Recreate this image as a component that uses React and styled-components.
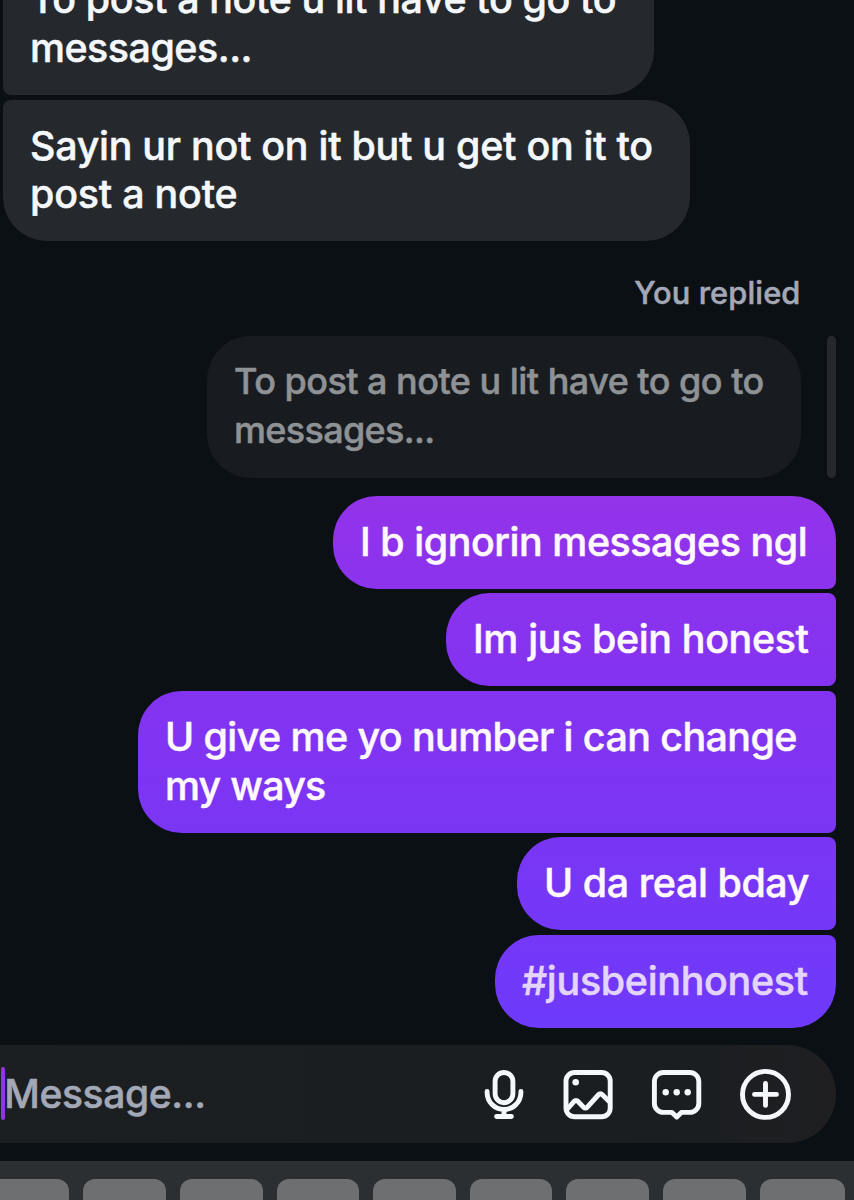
import React from 'react'
import styled, { createGlobalStyle } from 'styled-components'

const GlobalStyle = createGlobalStyle`
  * { box-sizing: border-box; }
  body {
    margin: 0;
    background: #0b1014;
    font-family: Inter, 'Liberation Sans', sans-serif;
    font-weight: 500;
    overflow: hidden;
  }
`

const Screen = styled.div`
  width: 854px;
  height: 1200px;
  overflow: hidden;
  display: flex;
  flex-direction: column;
  background: #0b1014;
  -webkit-text-stroke: 0.5px currentColor;
`

const Thread = styled.div`
  display: flex;
  flex-direction: column;
  justify-content: flex-end;
  flex: none;
  gap: 4.8px;
  height: 1045px;
  padding: 0 18px 17.3px 3px;
`

const Bubble = styled.div`
  flex: none;
  align-self: ${p => (p.$mine ? 'flex-end' : 'flex-start')};
  width: ${p => p.$w}px;
  padding: 22px 0 22px 27px;
  border-radius: ${p => p.$radius};
  color: ${p => (p.$mine ? '#fdf9ff' : '#f5f8fb')};
  background: ${p => (p.$mine
    ? 'linear-gradient(180deg, #9333ea 496px, #8433f0 670px, #7936f5 860px, #6e3afb 1028px) fixed'
    : '#25292d')};
`

const Line = styled.span`
  display: block;
  width: max-content;
  white-space: nowrap;
  font-size: 39.4px;
  line-height: 48.8px;
  letter-spacing: ${p => p.$ls || 0}px;
`

const HashTag = styled.span`
  color: #e4d5fe;
`

const ReplyLabel = styled.div`
  flex: none;
  align-self: flex-end;
  height: 40px;
  margin: 27px 35.5px 18.2px 0;
  font-size: 30.8px;
  line-height: 40px;
  letter-spacing: 0.1px;
  color: #a3a8b7;
`

const Quote = styled.div`
  flex: none;
  display: flex;
  justify-content: flex-end;
  gap: 26px;
  margin-bottom: 13.2px;
`

const QuoteBubble = styled(Bubble)`
  padding: 21.4px 0 22.8px 27px;
  color: #8f9295;
  background: #181c20;

  ${Line} {
    font-size: 36px;
  }
`

const QuoteBar = styled.div`
  width: 9px;
  border-radius: 5px;
  background: #25292d;
`

const Composer = styled.div`
  flex: none;
  display: flex;
  align-items: center;
  width: 836px;
  height: 97.5px;
  border-radius: 0 49px 49px 0;
  background: linear-gradient(90deg, #1b1f21, #1a1e20 80%, #1f1f22);
`

const Caret = styled.div`
  width: 4.6px;
  height: 53px;
  margin-left: 0.6px;
  border-radius: 2px;
  background: #9333ea;
`

const Placeholder = styled.div`
  flex: 1;
  margin-left: -1px;
  font-size: 39px;
  line-height: 48px;
  letter-spacing: -0.38px;
  color: #a3a8b7;
`

const Actions = styled.div`
  display: flex;
  align-items: center;
  gap: 28px;
  margin-right: 41px;

  svg {
    display: block;
    fill: none;
    stroke: #f5f8fb;
    stroke-width: 4.9;
    stroke-linecap: round;
    stroke-linejoin: round;
  }
`

const Keyboard = styled.div`
  flex: 1;
  margin-top: 18.5px;
  padding-top: 17.5px;
  background: #2c2f32;
  display: flex;
  gap: 14px;
`

const Key = styled.div`
  flex: none;
  width: 82.6px;
  height: 60px;
  border-radius: 12px;
  background: #6e6f71;

  &:first-child { margin-left: -13.2px; }
  &:last-child { width: 85px; }
`

const keys = ['q', 'w', 'e', 'r', 't', 'y', 'u', 'i', 'o']

const MicIcon = () => (
  <svg width="60" height="60" viewBox="0 0 60 60">
    <rect x="24.1" y="8.5" width="17.8" height="30.2" rx="8.9" />
    <path d="M16.1 27.4v1c0 9.4 7.5 17 16.9 17s16.9-7.6 16.9-17v-1M33 46v6.5M25.6 52.5h14.8" />
  </svg>
)

const GalleryIcon = () => (
  <svg width="60" height="60" viewBox="0 0 60 60">
    <rect x="7" y="8.5" width="44.2" height="44.2" rx="8.5" />
    <path d="M8 45.5l7.3-8.3a2.3 2.3 0 0 1 3.5 0l5.9 6.2a2.3 2.3 0 0 0 3.4 0l11.6-12.9a2.3 2.3 0 0 1 3.4 0l7.4 7.3" />
    <circle cx="16.7" cy="18.3" r="3.3" fill="#f5f8fb" stroke="none" />
  </svg>
)

const StickerIcon = () => (
  <svg width="60" height="60" viewBox="0 0 60 60">
    <path d="M16.4 8.5h26.4a9 9 0 0 1 9 9v21.9a9 9 0 0 1-9 9h-8.400l-4.700 4.600l-4.700-4.600h-8.600a9 9 0 0 1-9-9V17.500a9 9 0 0 1 9-9z" />
    <g fill="#f5f8fb" stroke="none">
      <circle cx="18.700" cy="28.300" r="3.200" />
      <circle cx="29.700" cy="28.300" r="3.200" />
      <circle cx="40.700" cy="28.300" r="3.200" />
    </g>
  </svg>
)

const PlusIcon = () => (
  <svg width="60" height="60" viewBox="0 0 60 60">
    <circle cx="30.500" cy="30.400" r="23" />
    <path d="M30.500 19.400v22M19.500 30.400h22" />
  </svg>
)

export default function App() {
  return (
    <>
      <GlobalStyle />
      <Screen>
        <Thread>
          <Bubble $w={651} $radius="44px 44px 44px 8px">
            <Line $ls={-0.38}>To post a note u lit have to go to</Line>
            <Line $ls={-0.5}>messages...</Line>
          </Bubble>
          <Bubble $w={687} $radius="8px 44px 44px 44px">
            <Line $ls={-0.27}>Sayin ur not on it but u get on it to</Line>
            <Line $ls={-0.22}>post a note</Line>
          </Bubble>

          <ReplyLabel>You replied</ReplyLabel>
          <Quote>
            <QuoteBubble $w={594} $radius="44px">
              <Line $ls={-0.52}>To post a note u lit have to go to</Line>
              <Line $ls={-0.68}>messages...</Line>
            </QuoteBubble>
            <QuoteBar />
          </Quote>

          <Bubble $mine $w={503} $radius="44px 44px 8px 44px">
            <Line $ls={-0.45}>I b ignorin messages ngl</Line>
          </Bubble>
          <Bubble $mine $w={390} $radius="44px 8px 8px 44px">
            <Line $ls={-0.36}>Im jus bein honest</Line>
          </Bubble>
          <Bubble $mine $w={698} $radius="44px 8px 8px 44px">
            <Line $ls={-0.57}>U give me yo number i can change</Line>
            <Line $ls={-0.75}>my ways</Line>
          </Bubble>
          <Bubble $mine $w={319} $radius="44px 8px 8px 44px">
            <Line $ls={-0.42}>U da real bday</Line>
          </Bubble>
          <Bubble $mine $w={341} $radius="44px 8px 44px 44px">
            <Line $ls={-0.3}><HashTag>#jusbeinhonest</HashTag></Line>
          </Bubble>
        </Thread>

        <Composer>
          <Caret />
          <Placeholder>Message...</Placeholder>
          <Actions>
            <MicIcon />
            <GalleryIcon />
            <StickerIcon />
            <PlusIcon />
          </Actions>
        </Composer>

        <Keyboard>
          {keys.map(k => <Key key={k} />)}
        </Keyboard>
      </Screen>
    </>
  )
}
